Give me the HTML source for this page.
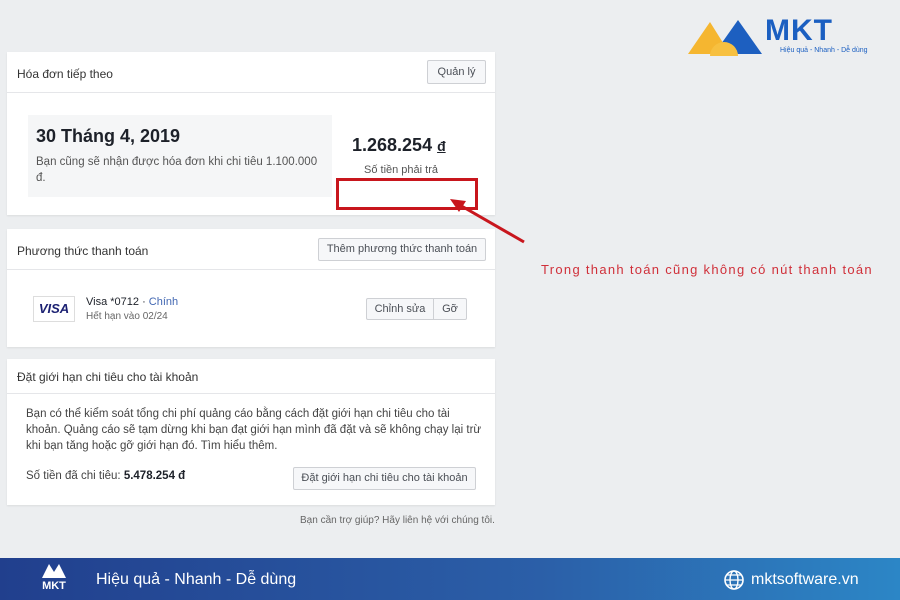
<!DOCTYPE html><html><head><meta charset="utf-8"><style>
*{margin:0;padding:0;box-sizing:border-box}
body{width:900px;height:600px;background:#eceef0;font-family:"Liberation Sans",sans-serif;position:relative;overflow:hidden;color:#1d2129}
.a{position:absolute}
.p{position:absolute;left:7px;width:488px;background:#fff;box-shadow:0 1px 2px rgba(0,0,0,.08)}
.h{height:41px;border-bottom:1px solid #e5e6e9;font-size:12px;padding:15px 0 0 10px;color:#333}
.btn{position:absolute;background:#f6f7f9;border:1px solid #ced0d4;border-radius:2px;font-size:11px;color:#4b4f56;text-align:center}
</style></head><body>
<div class="p" style="top:52px;height:163px">
<div class="h">Hóa đơn tiếp theo</div>
<div class="btn" style="left:420px;top:8px;width:59px;height:24px;line-height:22px">Quản lý</div>
<div class="a" style="left:21px;top:63px;width:304px;height:82px;background:#f5f6f7"></div>
<div class="a" style="left:29px;top:74px;font-size:18px;font-weight:bold">30 Tháng 4, 2019</div>
<div class="a" style="left:29px;top:102px;font-size:11.5px;color:#555;width:292px;line-height:16px">Bạn cũng sẽ nhận được hóa đơn khi chi tiêu 1.100.000 đ.</div>
<div class="a" style="left:345px;top:83px;font-size:18px;font-weight:bold">1.268.254 <u style="font-size:14px">đ</u></div>
<div class="a" style="left:357px;top:112px;font-size:11px;color:#555">Số tiền phải trả</div>
</div>
<div class="a" style="left:336px;top:178px;width:142px;height:32px;border:3px solid #c8161d"></div>
<svg class="a" style="left:440px;top:190px" width="90" height="60"><line x1="84" y1="52" x2="18" y2="14" stroke="#c8161d" stroke-width="3"/><polygon points="10,9 26,11 19,22" fill="#c8161d"/></svg>
<div class="a" style="left:541px;top:262px;font-size:13px;color:#d0303a;letter-spacing:1.3px">Trong thanh toán cũng không có nút thanh toán</div>
<div class="p" style="top:229px;height:118px">
<div class="h">Phương thức thanh toán</div>
<div class="btn" style="left:311px;top:9px;width:168px;height:23px;line-height:21px">Thêm phương thức thanh toán</div>
<div class="a" style="left:26px;top:67px;width:42px;height:26px;border:1px solid #ddd;font-size:13px;font-weight:bold;font-style:italic;color:#1a1f71;text-align:center;line-height:24px">VISA</div>
<div class="a" style="left:79px;top:67px;font-size:11px">Visa *0712 · <span style="color:#4267b2">Chính</span></div>
<div class="a" style="left:79px;top:82px;font-size:10px;color:#666">Hết hạn vào 02/24</div>
<div class="btn" style="left:359px;top:69px;width:101px;height:22px;line-height:20px"><span style="display:inline-block;width:67px;border-right:1px solid #ced0d4">Chỉnh sửa</span><span style="display:inline-block;width:32px">Gỡ</span></div>
</div>
<div class="p" style="top:359px;height:146px">
<div class="h" style="height:35px;padding-top:11px">Đặt giới hạn chi tiêu cho tài khoản</div>
<div class="a" style="left:19px;top:47px;width:460px;font-size:11.5px;line-height:16px;color:#444">Bạn có thể kiểm soát tổng chi phí quảng cáo bằng cách đặt giới hạn chi tiêu cho tài khoản. Quảng cáo sẽ tạm dừng khi bạn đạt giới hạn mình đã đặt và sẽ không chạy lại trừ khi bạn tăng hoặc gỡ giới hạn đó. Tìm hiểu thêm.</div>
<div class="a" style="left:19px;top:111px;font-size:11.5px;color:#444">Số tiền đã chi tiêu: <b style="color:#1d2129">5.478.254 đ</b></div>
<div class="btn" style="left:286px;top:108px;width:183px;height:23px;line-height:21px">Đặt giới hạn chi tiêu cho tài khoản</div>
</div>
<div class="a" style="left:300px;top:515px;font-size:10px;color:#666">Bạn cần trợ giúp? Hãy liên hệ với chúng tôi.</div>
<svg class="a" style="left:686px;top:16px" width="80" height="40"><path d="M2 38 L24 6 L44 38Z" fill="#f5b630"/><path d="M28 38 L52 4 L76 38Z" fill="#1d5fc0"/><circle cx="38" cy="40" r="14" fill="#f7c040"/></svg>
<div class="a" style="left:765px;top:14px;font-size:30px;font-weight:bold;color:#1b5fc1;letter-spacing:1px">MKT</div>
<div class="a" style="left:780px;top:47px;font-size:7px;color:#1b5fc1">Hiệu quả - Nhanh - Dễ dùng</div>
<div class="a" style="left:0;top:558px;width:900px;height:42px;background:linear-gradient(90deg,#213f8d,#2b5fa8 60%,#2c86c6)"></div>
<div class="a" style="left:40px;top:562px;width:28px;height:34px;color:#fff;font-size:11px;font-weight:bold;text-align:center;padding-top:18px">MKT</div>
<svg class="a" style="left:40px;top:562px" width="28" height="18"><path d="M2 16 L9 2 L14 10 L19 2 L26 16Z" fill="#fff"/></svg>
<div class="a" style="left:96px;top:571px;font-size:16px;color:#fff">Hiệu quả - Nhanh - Dễ dùng</div>
<svg class="a" style="left:724px;top:570px" width="20" height="20"><circle cx="10" cy="10" r="9" fill="none" stroke="#fff" stroke-width="1.6"/><ellipse cx="10" cy="10" rx="4" ry="9" fill="none" stroke="#fff" stroke-width="1.4"/><path d="M1 10H19M3 5H17M3 15H17" stroke="#fff" stroke-width="1.3"/></svg>
<div class="a" style="left:751px;top:571px;font-size:16px;color:#fff">mktsoftware.vn</div>
</body></html>
